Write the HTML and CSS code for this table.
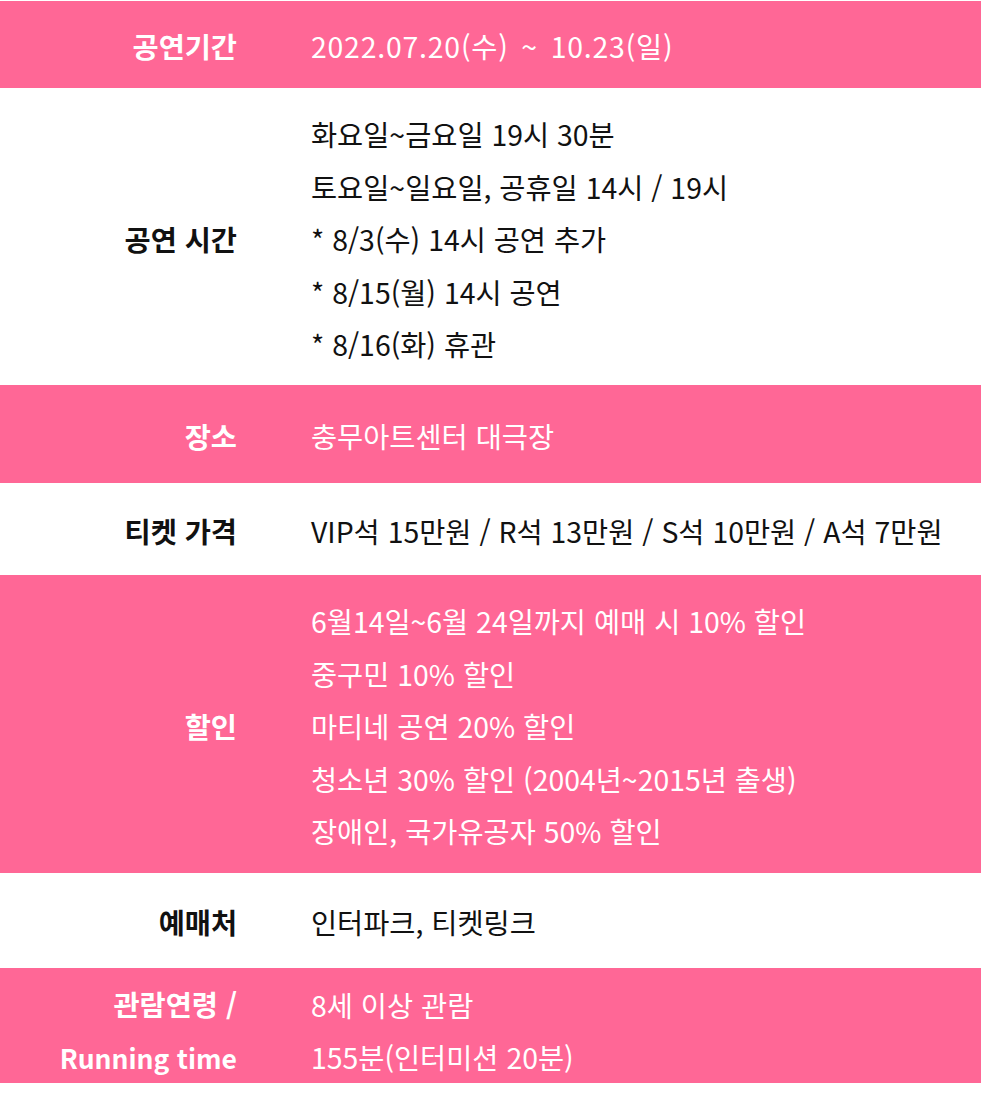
FILE: index.html
```html
<!DOCTYPE html>
<html lang="ko">
<head>
<meta charset="utf-8">
<link rel="stylesheet" href="styles.css">
</head>
<body>
<div class="info">
  <div class="row pink r1">
    <div class="label">공연기간</div>
    <div class="value"><p class="wide">2022.07.20(수) ~ 10.23(일)</p></div>
  </div>
  <div class="row r2">
    <div class="label">공연 시간</div>
    <div class="value">
      <p>화요일~금요일 19시 30분</p>
      <p>토요일~일요일, 공휴일 14시 / 19시</p>
      <p>* 8/3(수) 14시 공연 추가</p>
      <p>* 8/15(월) 14시 공연</p>
      <p>* 8/16(화) 휴관</p>
    </div>
  </div>
  <div class="row pink r3">
    <div class="label">장소</div>
    <div class="value"><p>충무아트센터 대극장</p></div>
  </div>
  <div class="row r4">
    <div class="label">티켓 가격</div>
    <div class="value"><p>VIP석 15만원 / R석 13만원 / S석 10만원 / A석 7만원</p></div>
  </div>
  <div class="row pink r5">
    <div class="label">할인</div>
    <div class="value">
      <p>6월14일~6월 24일까지 예매 시 10% 할인</p>
      <p>중구민 10% 할인</p>
      <p>마티네 공연 20% 할인</p>
      <p>청소년 30% 할인 (2004년~2015년 출생)</p>
      <p>장애인, 국가유공자 50% 할인</p>
    </div>
  </div>
  <div class="row r6">
    <div class="label">예매처</div>
    <div class="value"><p>인터파크, 티켓링크</p></div>
  </div>
  <div class="row pink r7">
    <div class="label">관람연령 /<br><span class="latin">Running time</span></div>
    <div class="value">
      <p>8세 이상 관람</p>
      <p>155분(인터미션 20분)</p>
    </div>
  </div>
</div>
</body>
</html>
```
FILE: styles.css
```css
html, body {
  margin: 0;
  padding: 0;
  background: #ffffff;
}
body {
  font-family: "Noto Sans CJK KR", "Noto Sans", sans-serif;
  font-size: 28.4px;
  line-height: 52.5px;
  color: #111111;
}
.info {
  padding-top: 1px;
  width: 981px;
}
.row {
  display: grid;
  grid-template-columns: 237px 1fr;
  column-gap: 74px;
  align-items: center;
  box-sizing: border-box;
}
.pink {
  background: #ff6796;
  color: #ffffff;
}
.label {
  text-align: right;
  font-weight: 700;
}
.latin {
  font-size: 26.5px;
}
.value p {
  margin: 0;
  white-space: nowrap;
}
.value .wide {
  letter-spacing: 0.8px;
  word-spacing: 4px;
}
.r1 { height: 87px; padding-top: 4px; }
.r2 { height: 297px; padding-top: 6px; }
.r3 { height: 98px; padding-top: 4px; }
.r4 { height: 92px; padding-top: 4px; }
.r5 { height: 298px; padding-top: 5px; }
.r6 { height: 95px; padding-top: 4px; }
.r7 { height: 115px; padding-top: 10px; }
```
